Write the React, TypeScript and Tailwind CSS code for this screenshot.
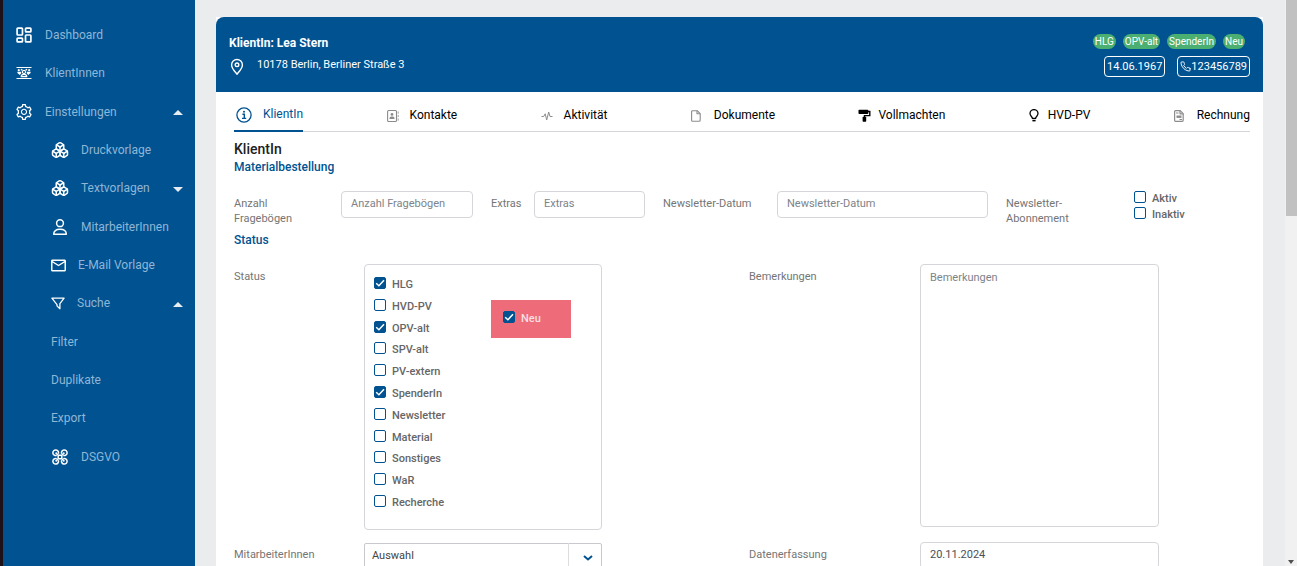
import React, { useState } from "react";
import { AiOutlineSetting } from "react-icons/ai";
import { FiPhone } from "react-icons/fi";
import { MdOutlineEmail } from "react-icons/md";
import { Boxes, LayoutDashboard } from "lucide-react";

type IconProps = { className?: string };

function AudienceIcon({ className }: IconProps) {
  return (
    <svg viewBox="0 0 16 14" className={className} fill="none" stroke="currentColor" strokeWidth="1.1" aria-hidden="true">
      <path d="M0.5 1.5h15M0.5 12.5h15" strokeWidth="1.2" />
      <circle cx="8" cy="6" r="1.6" />
      <path d="M5.200 10.600c0-1.600 1-2.200 2.800-2.200s2.800.6 2.800 2.200z" />
      <g fill="currentColor" stroke="none">
        <circle cx="2.800" cy="4.200" r="1.1" />
        <circle cx="13.200" cy="4.200" r="1.1" />
        <circle cx="5.600" cy="3.700" r="0.9" />
        <circle cx="10.400" cy="3.700" r="0.9" />
        <path d="M1.400 5.800h3.800v1.400L3.800 9 1.400 7zM14.600 5.800h-3.800v1.400L12.200 9l2.400-2z" />
      </g>
    </svg>
  );
}

function UserIcon({ className }: IconProps) {
  return (
    <svg viewBox="0 0 18 18" className={className} fill="none" stroke="currentColor" strokeWidth="1.500" aria-hidden="true">
      <circle cx="9" cy="5.200" r="3.400" />
      <path d="M2.700 16.200c0-3.200 2.300-4.900 6.300-4.900s6.300 1.700 6.300 4.900z" strokeLinejoin="round" />
    </svg>
  );
}

function FunnelIcon({ className }: IconProps) {
  return (
    <svg viewBox="0 0 14 13" className={className} fill="none" stroke="currentColor" strokeWidth="1.300" aria-hidden="true">
      <path d="M0.900 1.200h12.200L8.900 6.700v5L6 8.900V7.600z" strokeLinejoin="round" />
    </svg>
  );
}

function DroneIcon({ className }: IconProps) {
  return (
    <svg viewBox="0 0 16 16" className={className} fill="none" stroke="currentColor" strokeWidth="1.500" aria-hidden="true">
      <path d="M6.200 6.200h3.600v3.600H6.200zM6.200 6.200 3.600 3.600M9.800 6.200l2.600-2.600M6.200 9.800l-2.600 2.600M9.800 9.800l2.600 2.600" />
      <path d="M6.300 4.700A2.800 2.800 0 1 0 4.700 6.300M9.700 4.700a2.800 2.800 0 1 1 1.600 1.600M6.300 11.300a2.800 2.800 0 1 1-1.600-1.600M9.700 11.300a2.800 2.800 0 1 0 1.600-1.600" />
    </svg>
  );
}

function PinIcon({ className }: IconProps) {
  return (
    <svg viewBox="0 0 14 18" className={className} fill="none" stroke="currentColor" strokeWidth="1.4" aria-hidden="true">
      <path d="M7 16.200C4.600 13.200 1.600 10.200 1.600 6.900a5.400 5.400 0 0 1 10.800 0c0 3.300-3 6.300-5.400 9.300z" strokeLinejoin="round" />
      <circle cx="7" cy="6.800" r="1.800" />
    </svg>
  );
}

function InfoIcon({ className }: IconProps) {
  return (
    <svg viewBox="0 0 16 16" className={className} fill="none" stroke="currentColor" aria-hidden="true">
      <circle cx="8" cy="8" r="7.100" strokeWidth="1.300" />
      <path d="M6.400 7.200h1.900v4M6 11.400h4.200" strokeWidth="1.400" />
      <circle cx="8" cy="4.700" r="1" fill="currentColor" stroke="none" />
    </svg>
  );
}

function AddressIcon({ className }: IconProps) {
  return (
    <svg viewBox="0 0 12 14" className={className} fill="none" stroke="currentColor" strokeWidth="1.100" aria-hidden="true">
      <rect x="0.600" y="1.500" width="8.900" height="11" rx="1" />
      <path d="M11.200 2.500v2.200M11.200 6v2.200M11.200 9.500v2.200" strokeWidth="0.800" />
      <circle cx="5" cy="5.400" r="1.400" fill="currentColor" stroke="none" />
      <path d="M2.500 10V9.200c0-1.200 1-1.700 2.500-1.700s2.500.5 2.500 1.700v.8z" fill="currentColor" stroke="none" />
    </svg>
  );
}

function PulseIcon({ className }: IconProps) {
  return (
    <svg viewBox="0 0 12 12" className={className} fill="none" stroke="currentColor" strokeWidth="1" strokeLinejoin="round" aria-hidden="true">
      <path d="M0.500 6.500h2.200L4.200 3.800l1.500 6.200 2-8 1.300 4.500h2.500" />
    </svg>
  );
}

function FileIcon({ className }: IconProps) {
  return (
    <svg viewBox="0 0 10 12" className={className} fill="none" stroke="currentColor" strokeWidth="1.100" strokeLinejoin="round" aria-hidden="true">
      <path d="M1.600.7h4.600L9.200 3.700v6.600a1 1 0 0 1-1 1H1.600a1 1 0 0 1-1-1V1.700a1 1 0 0 1 1-1z" />
      <path d="M6 .8v3h3.200" />
    </svg>
  );
}

function RollerIcon({ className }: IconProps) {
  return (
    <svg viewBox="0 0 13 13" className={className} fill="currentColor" aria-hidden="true">
      <rect x="0.500" y="0.800" width="9.800" height="4.200" rx="0.800" />
      <path d="M10 1.800h2.500v5.400H7.200V8.400H5.800V6h5.300V3.200H10z" />
      <rect x="4.600" y="7.800" width="3.600" height="4.900" rx="0.600" />
    </svg>
  );
}

function InvoiceIcon({ className }: IconProps) {
  return (
    <svg viewBox="0 0 10 12" className={className} fill="none" stroke="currentColor" strokeWidth="1.200" strokeLinejoin="round" aria-hidden="true">
      <path d="M1.600.7h4.600L9.200 3.700v6.600a1 1 0 0 1-1 1H1.600a1 1 0 0 1-1-1V1.700a1 1 0 0 1 1-1z" />
      <path d="M6 .8v3h3.200M2 3h2.500M5.500 9.500H8" />
      <path d="M2.500 5.500h5v2.400h-5z" fill="currentColor" stroke="none" />
    </svg>
  );
}

function BulbIcon({ className }: IconProps) {
  return (
    <svg viewBox="0 0 10 13" className={className} fill="none" stroke="currentColor" strokeWidth="1.300" aria-hidden="true">
      <path d="M3.400 9.400C3.400 7.800 1 7 1 4.600a4 4 0 0 1 8 0C9 7 6.600 7.800 6.600 9.400z" strokeLinejoin="round" />
      <path d="M3.400 11.600h3.200" strokeWidth="1.600" />
    </svg>
  );
}

type NavItem = {
  label: string;
  icon?: React.ReactNode;
  sub?: boolean;
  caret?: "up" | "down";
};

const navItems: NavItem[] = [
  { label: "Dashboard", icon: <LayoutDashboard className="size-4 scale-115" strokeWidth={2.2} /> },
  { label: "KlientInnen", icon: <AudienceIcon className="h-[14px] w-4" /> },
  { label: "Einstellungen", icon: <AiOutlineSetting className="size-4 scale-115" />, caret: "up" },
  { label: "Druckvorlage", icon: <Boxes className="size-[18px]" />, sub: true },
  { label: "Textvorlagen", icon: <Boxes className="size-[18px]" />, sub: true, caret: "down" },
  { label: "MitarbeiterInnen", icon: <UserIcon className="size-[18px]" />, sub: true },
  { label: "E-Mail Vorlage", icon: <MdOutlineEmail className="size-[15px] scale-120" />, sub: true },
  { label: "Suche", icon: <FunnelIcon className="h-[13px] w-[14px]" />, sub: true, caret: "up" },
  { label: "Filter", sub: true },
  { label: "Duplikate", sub: true },
  { label: "Export", sub: true },
  { label: "DSGVO", icon: <DroneIcon className="h-4 w-[18px]" />, sub: true },
];

function Sidebar() {
  return (
    <nav className="w-[195px] shrink-0 border-l-[3px] border-[#1d1217] bg-[#005291] pt-4">
      <ul className="flex h-[460px] flex-col">
        {navItems.map((item) => (
          <li key={item.label} className="flex-1">
            <a
              href="#"
              className={`flex h-full items-center pr-3 text-xs text-[#8fb6d6] ${item.sub ? "gap-3 pl-12" : "gap-[13px] pl-[13px]"}`}
            >
              {item.icon && <span className="shrink-0 text-white">{item.icon}</span>}
              <span>{item.label}</span>
              {item.caret && (
                <svg viewBox="0 0 10 5" className="mt-0.5 ml-auto h-[5px] w-[10px] fill-[#e8edf2]" aria-hidden="true">
                  <path d={item.caret === "up" ? "M0 5 5 0l5 5z" : "M0 0l5 5 5-5z"} />
                </svg>
              )}
            </a>
          </li>
        ))}
      </ul>
    </nav>
  );
}

function Check({ label, defaultChecked = false, light = false }: { label: string; defaultChecked?: boolean; light?: boolean }) {
  return (
    <label className={`flex items-center gap-1.5 text-[11px] leading-4 font-medium ${light ? "text-[#f9dfe2]" : "text-[#666]"}`}>
      <span className="relative mb-1 size-3 shrink-0">
        <input
          type="checkbox"
          defaultChecked={defaultChecked}
          className="peer block size-3 appearance-none rounded-xs border border-[#005291] bg-white checked:bg-[#005291]"
        />
        <svg
          viewBox="0 0 12 12"
          className="pointer-events-none absolute inset-0 hidden size-3 peer-checked:block"
          fill="none"
          stroke="white"
          strokeWidth="1.500"
          aria-hidden="true"
        >
          <path d="M2.200 6.200 4.900 8.800 10 3.300" />
        </svg>
      </span>
      {label}
    </label>
  );
}

const tabs = [
  { label: "KlientIn", icon: <InfoIcon className="mt-0.5 size-4" />, gap: "gap-[11px]" },
  { label: "Kontakte", icon: <AddressIcon className="mt-0.5 h-[14px] w-3 text-[#8c8c8c]" />, gap: "gap-[11px]" },
  { label: "Aktivität", icon: <PulseIcon className="mt-0.5 size-3 text-[#8c8c8c]" />, gap: "gap-[11px]" },
  { label: "Dokumente", icon: <FileIcon className="mt-0.5 h-3 w-[10px] text-[#8c8c8c]" />, gap: "gap-[13px]" },
  { label: "Vollmachten", icon: <RollerIcon className="size-[13px]" />, gap: "gap-[7px]" },
  { label: "HVD-PV", icon: <BulbIcon className="h-[13px] w-[10px]" />, gap: "gap-[9px]" },
  { label: "Rechnung", icon: <InvoiceIcon className="mt-0.5 h-3 w-[10px] text-[#8c8c8c]" />, gap: "gap-[13px]" },
];

const inputClass =
  "h-[27px] w-full rounded-sm border border-[#d5d6da] bg-white px-[9px] pb-0.5 text-[11px] text-[#495057] placeholder:text-[#7d838a] outline-none";
const labelClass = "pt-[5px] text-[11px] leading-[15px] text-[#757575]";

const statuses: [string, boolean][] = [
  ["HLG", true],
  ["HVD-PV", false],
  ["OPV-alt", true],
  ["SPV-alt", false],
  ["PV-extern", false],
  ["SpenderIn", true],
  ["Newsletter", false],
  ["Material", false],
  ["Sonstiges", false],
  ["WaR", false],
  ["Recherche", false],
];

const detailGrid =
  "grid grid-cols-[minmax(0,130fr)_minmax(0,238fr)_minmax(0,147fr)_minmax(0,171fr)_minmax(0,239fr)_minmax(0,91fr)]";

export default function App() {
  const [active, setActive] = useState("KlientIn");
  return (
    <div className="flex h-screen overflow-hidden bg-[#ebecee] font-[Roboto,sans-serif]">
      <Sidebar />
      <main className="min-w-0 flex-1 overflow-hidden pt-[17px] pr-[22px] pl-[21px]">
        <div className="min-h-full bg-white">
          <header className="flex h-[75px] justify-between rounded-t-lg bg-[#005291] px-[13px] pt-[17px] text-white">
            <div>
              <h1 className="text-xs leading-[18px] font-bold">KlientIn: Lea Stern</h1>
              <div className="mt-1 flex gap-3 text-[11px]">
                <PinIcon className="mt-0.5 h-[18px] w-4" />
                <p className="leading-[18px]">10178 Berlin, Berliner Straße 3</p>
              </div>
            </div>
            <div className="flex flex-col items-end gap-[7px]">
              <div className="flex gap-[7px] pr-[5px] text-[10px] leading-[15px]">
                {["HLG", "OPV-alt", "SpenderIn", "Neu"].map((b) => (
                  <span key={b} className="rounded-full bg-[#4caf72] px-[2px]">
                    {b}
                  </span>
                ))}
              </div>
              <div className="flex gap-3 text-[11px] leading-[19px]">
                <span className="rounded-sm border border-white px-[2px]">14.06.1967</span>
                <span className="flex items-center rounded-sm border border-white px-[2px]">
                  <FiPhone className="size-[11px]" />
                  123456789
                </span>
              </div>
            </div>
          </header>

          <div className="pr-[13px] pl-[18px]">
            <div role="tablist" className="flex h-10 justify-between border-b border-[#d5d6da]">
              {tabs.map((t) => (
                <button
                  key={t.label}
                  type="button"
                  role="tab"
                  aria-selected={active === t.label}
                  onClick={() => setActive(t.label)}
                  className={`-mb-px flex items-center pt-1.5 text-xs ${t.gap} ${
                    active === t.label ? "border-b-2 border-[#005291] pl-0.5 text-[#005291]" : "text-black"
                  }`}
                >
                  {t.icon}
                  {t.label}
                </button>
              ))}
            </div>

            <h2 className="mt-2 text-sm leading-[18px] font-medium text-[#212121]">KlientIn</h2>
            <h3 className="text-xs leading-[18px] font-medium text-[#005291]">Materialbestellung</h3>

            <div className="mt-[15px] grid grid-cols-[minmax(0,89fr)_minmax(0,132fr)_minmax(0,25fr)_minmax(0,111fr)_minmax(0,96fr)_minmax(0,211fr)_minmax(0,110fr)_minmax(0,116fr)] items-start gap-x-[18px]">
              <label htmlFor="anzahl" className={`${labelClass} w-16`}>
                Anzahl Fragebögen
              </label>
              <input id="anzahl" placeholder="Anzahl Fragebögen" className={inputClass} />
              <label htmlFor="extras" className={labelClass}>
                Extras
              </label>
              <input id="extras" placeholder="Extras" className={inputClass} />
              <label htmlFor="datum" className={labelClass}>
                Newsletter-Datum
              </label>
              <input id="datum" placeholder="Newsletter-Datum" className={inputClass} />
              <span className={`${labelClass} w-20`}>Newsletter-Abonnement</span>
              <div>
                <Check label="Aktiv" />
                <Check label="Inaktiv" />
              </div>
            </div>

            <h3 className="mt-[5px] text-xs leading-[18px] font-medium text-[#005291]">Status</h3>

            <div className={`${detailGrid} mt-[15px] items-start`}>
              <span className={labelClass}>Status</span>
              <div className="flex h-[266px] rounded-sm border border-[#d5d6da] pt-[9px] pl-[9px]">
                <div className="flex h-[240px] w-[117px] flex-col">
                  {statuses.map(([label, on]) => (
                    <div key={label} className="flex flex-1 items-center">
                      <Check label={label} defaultChecked={on} />
                    </div>
                  ))}
                </div>
                <div className="mt-[26px] flex h-[38px] w-20 items-center bg-[#ee6c79] pl-3">
                  <Check label="Neu" defaultChecked light />
                </div>
              </div>
              <span />
              <label htmlFor="bemerkungen" className={labelClass}>
                Bemerkungen
              </label>
              <textarea
                id="bemerkungen"
                placeholder="Bemerkungen"
                className="h-[263px] w-full resize-none rounded-sm border border-[#d5d6da] px-[9px] py-[5px] text-[11px] leading-[15px] placeholder:text-[#7d838a] outline-none"
              />
            </div>

            <div className={`${detailGrid} mt-3 items-start`}>
              <label htmlFor="mitarbeiter" className={labelClass}>
                MitarbeiterInnen
              </label>
              <div className="relative">
                <select
                  id="mitarbeiter"
                  className="h-[27px] w-full appearance-none rounded-xs border border-[#c8c9cc] bg-white pl-[7px] text-[11px] text-[#444] outline-none"
                >
                  <option>Auswahl</option>
                </select>
                <span className="pointer-events-none absolute inset-y-px right-px flex w-[33px] items-center justify-center border-l border-[#ddd]">
                  <svg viewBox="0 0 10 6" className="mt-1 ml-1.5 h-1.5 w-[10px]" fill="none" stroke="#005291" strokeWidth="2" aria-hidden="true">
                    <path d="M1 1l4 3.500L9 1" />
                  </svg>
                </span>
              </div>
              <span />
              <label htmlFor="erfassung" className={labelClass}>
                Datenerfassung
              </label>
              <input id="erfassung" defaultValue="20.11.2024" className={inputClass} />
            </div>
          </div>
        </div>
      </main>
      <div className="flex w-3 shrink-0 flex-col justify-between bg-[#f1f1f1] pl-px" aria-hidden="true">
        <div className="h-[216px] bg-[#c1c1c1]" />
        <svg viewBox="0 0 6 4" className="mb-0.5 ml-0.5 h-1 w-1.5 fill-[#505050]">
          <path d="M0 0h6L3 4z" />
        </svg>
      </div>
    </div>
  );
}
